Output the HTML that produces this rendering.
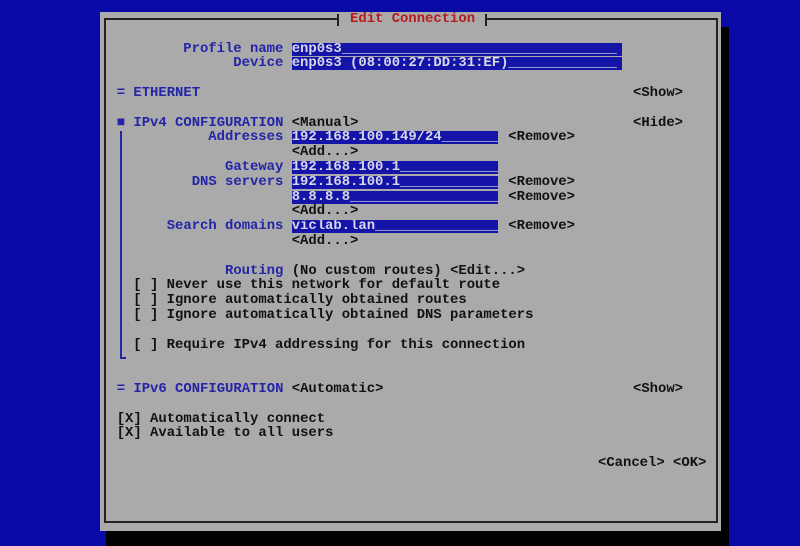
<!DOCTYPE html>
<html><head><meta charset="utf-8"><style>
*{margin:0;padding:0;box-sizing:border-box}
body{width:800px;height:546px;background:#0a0aa6;position:relative;overflow:hidden;font-family:"Liberation Mono",monospace;font-weight:bold;font-size:13.9px;color:#111}
.a{position:absolute;white-space:pre;height:14.8px;line-height:14.8px}
.b{color:#2424a8}
.r{color:#b81a1a}
.f{background:#1414a8;color:#d8d8e8;height:13px;line-height:13px;overflow:hidden}
</style></head><body>
<div style="position:absolute;left:721px;top:27px;width:8px;height:519px;background:#000"></div>
<div style="position:absolute;left:106px;top:531px;width:623px;height:15px;background:#000"></div>
<div style="position:absolute;left:100px;top:12px;width:621px;height:519px;background:#aaa"></div>
<div style="position:absolute;left:104px;top:18px;width:614px;height:505px;border:2px solid #222"></div>
<div style="position:absolute;left:337px;top:14px;width:150px;height:12px;background:#aaa;border-left:2px solid #222;border-right:2px solid #222"></div>
<div class="a r" style="left:341.7px;top:11.9px"> Edit Connection</div>

<div style="position:absolute;left:120px;top:131px;width:2px;height:228px;background:#2424a8"></div>
<div style="position:absolute;left:120px;top:357px;width:6px;height:2px;background:#2424a8"></div>

<div class="a b" style="left:183.3px;top:41.5px">Profile name</div>
<div class="a f" style="left:291.7px;top:42.5px;width:330px">enp0s3_________________________________</div>
<div class="a b" style="left:233.3px;top:56.3px">Device</div>
<div class="a f" style="left:291.7px;top:57.3px;width:330px">enp0s3 (08:00:27:DD:31:EF)_____________</div>

<div class="a" style="left:116.7px;top:85.9px"><span class="b">= ETHERNET</span></div>
<div class="a" style="left:633px;top:85.9px">&lt;Show&gt;</div>

<div class="a" style="left:116.7px;top:115.5px"><span class="b">■ IPv4 CONFIGURATION</span> &lt;Manual&gt;</div>
<div class="a" style="left:633px;top:115.5px">&lt;Hide&gt;</div>

<div class="a b" style="left:208.3px;top:130.3px">Addresses</div>
<div class="a f" style="left:291.7px;top:131.3px;width:206px">192.168.100.149/24_______</div>
<div class="a" style="left:508.3px;top:130.3px">&lt;Remove&gt;</div>
<div class="a" style="left:291.7px;top:145.1px">&lt;Add...&gt;</div>
<div class="a b" style="left:225px;top:159.9px">Gateway</div>
<div class="a f" style="left:291.7px;top:160.9px;width:206px">192.168.100.1____________</div>
<div class="a b" style="left:191.7px;top:174.7px">DNS servers</div>
<div class="a f" style="left:291.7px;top:175.7px;width:206px">192.168.100.1____________</div>
<div class="a" style="left:508.3px;top:174.7px">&lt;Remove&gt;</div>
<div class="a f" style="left:291.7px;top:190.5px;width:206px">8.8.8.8__________________</div>
<div class="a" style="left:508.3px;top:189.5px">&lt;Remove&gt;</div>
<div class="a" style="left:291.7px;top:204.3px">&lt;Add...&gt;</div>
<div class="a b" style="left:166.7px;top:219.1px">Search domains</div>
<div class="a f" style="left:291.7px;top:220.1px;width:206px">viclab.lan_______________</div>
<div class="a" style="left:508.3px;top:219.1px">&lt;Remove&gt;</div>
<div class="a" style="left:291.7px;top:233.9px">&lt;Add...&gt;</div>

<div class="a" style="left:225px;top:263.5px"><span class="b">Routing</span> (No custom routes) &lt;Edit...&gt;</div>
<div class="a" style="left:133.3px;top:278.3px">[ ] Never use this network for default route</div>
<div class="a" style="left:133.3px;top:293.1px">[ ] Ignore automatically obtained routes</div>
<div class="a" style="left:133.3px;top:307.9px">[ ] Ignore automatically obtained DNS parameters</div>
<div class="a" style="left:133.3px;top:337.5px">[ ] Require IPv4 addressing for this connection</div>

<div class="a" style="left:116.7px;top:381.9px"><span class="b">= IPv6 CONFIGURATION</span> &lt;Automatic&gt;</div>
<div class="a" style="left:633px;top:381.9px">&lt;Show&gt;</div>

<div class="a" style="left:116.7px;top:411.5px">[X] Automatically connect</div>
<div class="a" style="left:116.7px;top:426.3px">[X] Available to all users</div>

<div class="a" style="left:598px;top:455.9px">&lt;Cancel&gt; &lt;OK&gt;</div>
</body></html>
